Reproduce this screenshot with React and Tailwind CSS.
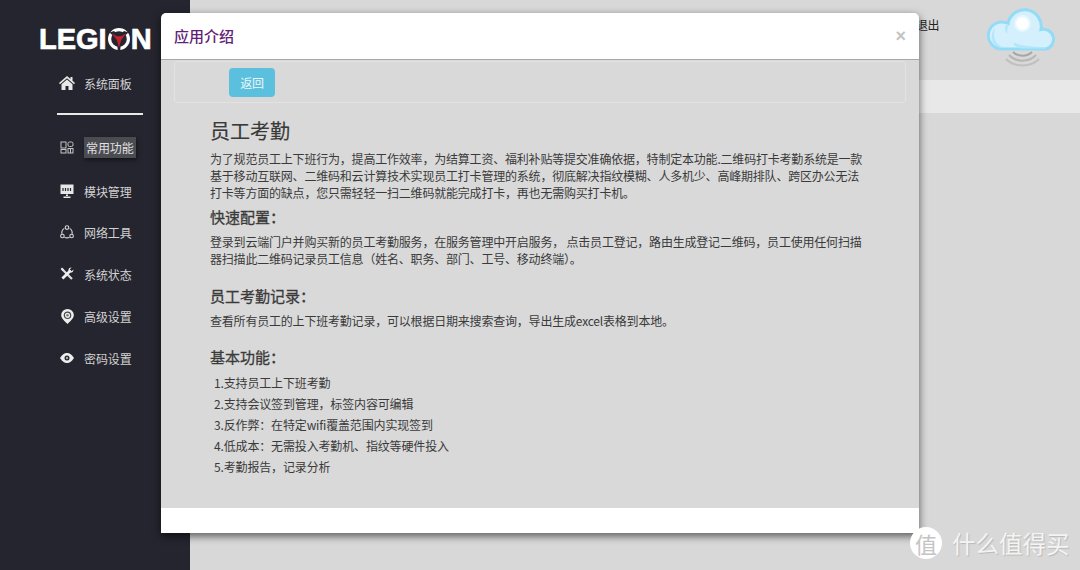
import React from "react";

const F = { fontFamily: '"Noto Sans CJK SC","Liberation Sans",sans-serif' };

const Home = () => (
  <svg width="16" height="14" viewBox="0 0 16 14" fill="#e8e8e8"><path d="M8 0 L0 7 L1 8.3 L8 2.3 L15 8.3 L16 7 L13.5 4.8 V1 H11.5 V3 Z" /><path d="M8 3.6 L2.5 8.3 V14 H6.5 V10 H9.5 V14 H13.5 V8.3 Z" /></svg>
);
const Apps = () => (
  <svg width="14" height="13" viewBox="0 0 14 13" fill="none" stroke="#c4c4c4" strokeWidth="1"><rect x="1" y="1" width="5" height="6" /><rect x="1" y="8.5" width="5" height="3.5" /><rect x="8" y="1" width="5" height="4.5" rx="1.5" /><rect x="8" y="7.5" width="5" height="4.5" /><path d="M10.5 7.5v4.5" /></svg>
);
const Screen = () => (
  <svg width="14" height="14" viewBox="0 0 14 14"><rect x="0.5" y="0.5" width="13" height="9.5" fill="#e6e6e6" /><path d="M3 4v3M5.5 4v3M8 4v3M10.5 4v3" stroke="#25252f" strokeWidth="1.2" /><path d="M6 10.5h2v1.5H6zM3.5 12.5h7V14h-7z" fill="#e6e6e6" /></svg>
);
const Network = () => (
  <svg width="14" height="14" viewBox="0 0 14 14" fill="none" stroke="#d8d8d8" strokeWidth="1.1"><path d="M4.3 3.4 A5.2 5.2 0 0 0 2 9" /><path d="M9.7 3.4 A5.2 5.2 0 0 1 12 9" /><path d="M4.5 12.2 A5.2 5.2 0 0 0 9.5 12.2" /><circle cx="7" cy="2.6" r="1.8" /><circle cx="2.4" cy="11" r="1.8" /><circle cx="11.6" cy="11" r="1.8" /></svg>
);
const Tools = () => (
  <svg width="14" height="14" viewBox="0 0 14 14" fill="none"><path d="M2 2 L12 12" stroke="#dcdcdc" strokeWidth="2.2" /><path d="M0.6 2 L2 0.6 L4 2.6 L2.6 4 Z" fill="#e8e8e8" /><path d="M10.6 3.4 L2.4 11.6" stroke="#efefef" strokeWidth="2.8" /><path d="M13.4 2.4 L11.6 4.2 L9.8 2.4 L11.6 0.6 A3 3 0 0 0 8.4 3.4 L10.6 5.6 A3 3 0 0 0 13.4 2.4 Z" fill="#efefef" /></svg>
);
const Pin = () => (
  <svg width="13" height="15" viewBox="0 0 13 15"><path d="M6.5 0 A6.3 6.3 0 0 1 12.8 6.3 C12.8 9.5 9 12.5 6.5 15 C4 12.5 0.2 9.5 0.2 6.3 A6.3 6.3 0 0 1 6.5 0Z" fill="#eeeeee" /><circle cx="6.5" cy="6.3" r="3.2" fill="none" stroke="#444" strokeWidth="1.2" /><circle cx="6.5" cy="6.3" r="1.2" fill="#777" /></svg>
);
const Eye = () => (
  <svg width="14" height="10" viewBox="0 0 14 10"><path d="M0 5 C2.5 1 4.8 0 7 0 C9.2 0 11.5 1 14 5 C11.5 9 9.2 10 7 10 C4.8 10 2.5 9 0 5Z" fill="#eeeeee" /><circle cx="7" cy="5" r="2.5" fill="#25252f" /><circle cx="7" cy="5" r="1.2" fill="#aaa" /></svg>
);

const LogoO = () => (
  <svg width="22" height="22" viewBox="0 0 22 22" className="mx-[1px] shrink-0">
    <circle cx="11" cy="11" r="9.4" fill="none" stroke="#fff" strokeWidth="3.2" />
    <path d="M1.5 4.5 L6 3 L11 7.8 L16 3 L20.5 4.5 L13.4 11 L12.2 22 H9.8 L8.6 11 Z" fill="#25252f" />
    <path d="M3.5 5 L8.6 8.2 H13.4 L18.5 5 L13.2 12 L11 19.5 L8.8 12 Z" fill="#c8202f" />
  </svg>
);

const Cloud = () => (
  <svg width="80" height="70" viewBox="0 0 80 70">
    <path d="M21 49 A13.5 13.5 0 1 1 27 23.5 A16.5 16.5 0 0 1 60 29.5 A10 10 0 1 1 65 49 Z" fill="#d4f0fd" stroke="#94dbf8" strokeWidth="3" />
    <path d="M24 47.5 C15 46 11 38 14 28 C9 33 9 47 21 47.5 Z" fill="#b4e6fb" />
    <path d="M27 24 C24 26 24 30 26 33 M33 43 C34 47 37 48 42 48 L64 48 C52 47 40 47 33 43Z" fill="#b4e6fb" stroke="#b4e6fb" strokeWidth="1" />
    <circle cx="41.5" cy="23.5" r="8.5" fill="#e6f7fe" />
    <circle cx="41.5" cy="23.5" r="6.3" fill="#ffffff" />
    <path d="M32 52 C37 57 46 57 51 52" fill="none" stroke="#a6a6a6" strokeWidth="2" />
    <path d="M28 55 C35 62.5 48 62.5 55 55" fill="none" stroke="#b6b6b6" strokeWidth="2" />
    <path d="M25 59 C33 67.5 50 67.5 58 59" fill="none" stroke="#c0c0c0" strokeWidth="2" />
  </svg>
);

function NavRow({ Icon, label, active }) {
  return (
    <div className="flex h-[42px] items-center">
      <div className="flex w-[24px] justify-center"><Icon /></div>
      <span className={active ? "ml-[5px] bg-[#4b4b52] px-[2px] py-[2px] text-[12px] leading-[17px] tracking-[-0.1px] text-[#e0e0e0] shadow-[1px_2px_4px_rgba(0,0,0,0.5)]" : "ml-[5px] text-[12px] leading-[17px] tracking-[-0.1px] text-[#d2d2d2]"}>{label}</span>
    </div>
  );
}

export default function App() {
  return (
    <div style={F} className="relative flex h-[570px] w-[1080px] overflow-hidden bg-[#d8d8d8]">
      <aside className="flex h-full w-[190px] shrink-0 flex-col bg-[#25252f] pl-[55px]">
        <div className="-ml-[16px] mt-[26px] flex h-[26px] items-center text-[29px] font-bold leading-none text-white [-webkit-text-stroke:0.7px_white]" style={{ fontFamily: '"Liberation Sans",sans-serif' }}>
          LEGI<LogoO />N
        </div>
        <div className="mt-[10px]"><NavRow Icon={Home} label="系统面板" /></div>
        <div className="ml-[2px] mt-[9px] h-[2px] w-[86px] bg-[#e8e8e8]" />
        <div className="mt-[11px] flex flex-col">
          <NavRow Icon={Apps} label="常用功能" active />
          <div className="mb-[-1px] mt-[2px]"><NavRow Icon={Screen} label="模块管理" /></div>
          <NavRow Icon={Network} label="网络工具" />
          <NavRow Icon={Tools} label="系统状态" />
          <NavRow Icon={Pin} label="高级设置" />
          <NavRow Icon={Eye} label="密码设置" />
        </div>
      </aside>

      <main className="flex-1">
        <div className="flex h-[80px] items-start">
          <span className="ml-[726px] mt-[16px] text-[12px] leading-[17px] tracking-[-0.5px] text-[#222]">退出</span>
          <div className="ml-[42px]"><Cloud /></div>
        </div>
        <div className="h-[33px] bg-[#e8e8e8]" />
      </main>

      <div className="absolute left-[161px] top-[13px] flex h-[520px] w-[758px] flex-col overflow-hidden rounded-t-[5px] bg-white shadow-[0_3px_9px_rgba(0,0,0,0.6)]">
        <header className="flex h-[47px] shrink-0 items-center justify-between border-b border-[#a8a8a8] pl-[13px] pr-[13px]">
          <h2 className="text-[15px] font-medium leading-[22px] text-[#5f2175]">应用介绍</h2>
          <span className="text-[18px] font-bold leading-none text-[#c4c4c4]" style={{ fontFamily: '"Liberation Sans",sans-serif' }}>×</span>
        </header>
        <div className="flex-1 bg-[#d9d9d9] pl-[13px] pr-[13px] pt-[1px]">
          <div className="flex h-[42px] items-center rounded-[4px] border border-[#e3e3e3] pl-[54px]">
            <button className="h-[29px] w-[46px] rounded-[4px] bg-[#5bc0de] pt-[1px] text-[12px] tracking-[-0.2px] text-[#eef7fa]">返回</button>
          </div>
          <article className="ml-[36px] mr-[36px] mt-[14px] text-[#3a3a3a]">
            <h1 className="text-[20px] font-normal leading-[28px] [-webkit-text-stroke:0.2px_#3a3a3a]">员工考勤</h1>
            <p className="mt-[5px] text-[12px] leading-[17px] tracking-[-0.2px]">为了规范员工上下班行为，提高工作效率，为结算工资、福利补贴等提交准确依据，特制定本功能.二维码打卡考勤系统是一款基于移动互联网、二维码和云计算技术实现员工打卡管理的系统，彻底解决指纹模糊、人多机少、高峰期排队、跨区办公无法打卡等方面的缺点，您只需轻轻一扫二维码就能完成打卡，再也无需购买打卡机。</p>
            <h3 className="mt-[5px] text-[15px] font-normal leading-[22px] [-webkit-text-stroke:0.3px_#3a3a3a]">快速配置：</h3>
            <p className="mt-[5px] text-[12px] leading-[17px] tracking-[-0.2px]">登录到云端门户并购买新的员工考勤服务，在服务管理中开启服务， 点击员工登记，路由生成登记二维码，员工使用任何扫描器扫描此二维码记录员工信息（姓名、职务、部门、工号、移动终端）。</p>
            <h3 className="mt-[18px] text-[15px] font-normal leading-[22px] [-webkit-text-stroke:0.3px_#3a3a3a]">员工考勤记录：</h3>
            <p className="mt-[5px] text-[12px] leading-[17px] tracking-[-0.2px]">查看所有员工的上下班考勤记录，可以根据日期来搜索查询，导出生成excel表格到本地。</p>
            <h3 className="mt-[17px] text-[15px] font-normal leading-[22px] [-webkit-text-stroke:0.3px_#3a3a3a]">基本功能：</h3>
            <ul className="ml-[4px] mt-[4px] text-[12px] leading-[21px] tracking-[-0.15px]">
              <li>1.支持员工上下班考勤</li>
              <li>2.支持会议签到管理，标签内容可编辑</li>
              <li>3.反作弊：在特定wifi覆盖范围内实现签到</li>
              <li>4.低成本：无需投入考勤机、指纹等硬件投入</li>
              <li>5.考勤报告，记录分析</li>
            </ul>
          </article>
        </div>
        <footer className="h-[25px] shrink-0 bg-white" />
      </div>

      <div className="absolute left-[910px] top-[527px] flex items-center">
        <div className="flex h-[32px] w-[32px] items-center justify-center rounded-full bg-white text-[22px] leading-none text-[#c4c4c4]">值</div>
        <span className="ml-[10px] text-[23.5px] leading-[30px] text-[#f4f4f4] [text-shadow:1px_1px_1px_rgba(0,0,0,0.15)]">什么值得买</span>
      </div>
    </div>
  );
}
